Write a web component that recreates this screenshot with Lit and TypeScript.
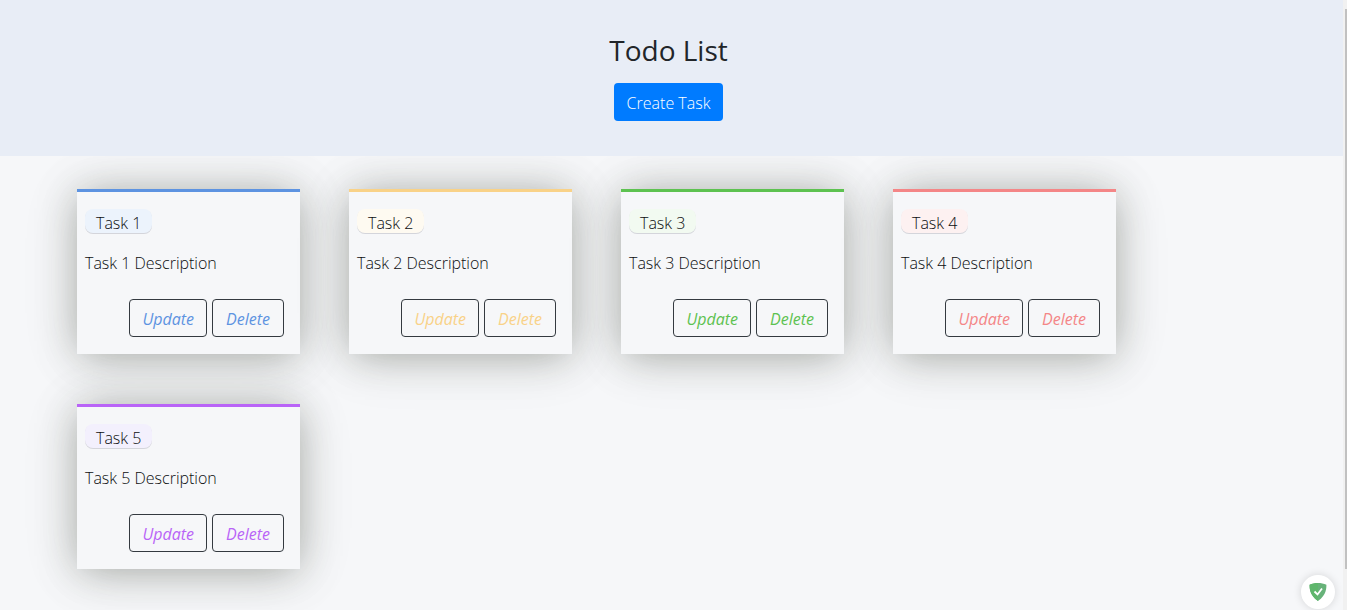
import { LitElement, html, css } from "lit";
import { customElement, property, state } from "lit/decorators.js";

interface Task {
  id: number;
  name: string;
  description: string;
}

const TONES = ["blue", "amber", "green", "red", "violet"];

@customElement("task-card")
class TaskCard extends LitElement {
  @property({ attribute: false }) task!: Task;
  @property({ reflect: true }) tone = "blue";

  static styles = css`
    :host {
      --accent: #5d93e1;
      --tint: #ecf3fc;
      display: flex;
      flex-direction: column;
      box-sizing: border-box;
      padding: 17px 8px;
      border-top: 3px solid var(--accent);
      background: #f6f7f9;
      box-shadow:
        0 3px 38px -3px rgba(46, 52, 36, 0.38),
        0 4px 60px rgba(46, 52, 36, 0.1);
    }
    :host([tone="amber"]) {
      --accent: #f9d288;
      --tint: #fefaf1;
    }
    :host([tone="green"]) {
      --accent: #5dc250;
      --tint: #f2faf1;
    }
    :host([tone="red"]) {
      --accent: #f48687;
      --tint: #fdf1f1;
    }
    :host([tone="violet"]) {
      --accent: #b964f7;
      --tint: #f3f0fd;
    }
    .name {
      align-self: flex-start;
      margin: 0;
      padding: 4px 11px 0;
      border-radius: 8px;
      background: var(--tint);
      box-shadow: 0 1px 0 rgba(40, 40, 60, 0.16);
      font-size: 16px;
      font-weight: 300;
      line-height: 20px;
    }
    .description {
      margin: 18px 0 24px;
      line-height: 24px;
    }
    .actions {
      display: flex;
      justify-content: flex-end;
      gap: 5px;
      padding-right: 8px;
    }
    button {
      box-sizing: border-box;
      min-width: 72px;
      height: 38px;
      padding: 2px 12px 0;
      border: 1px solid #343a40;
      border-radius: 4px;
      background: transparent;
      color: var(--accent);
      font: italic 400 16px/24px "Open Sans", "Noto Sans", sans-serif;
      cursor: pointer;
    }
  `;

  render() {
    return html`
      <h2 class="name">${this.task.name}</h2>
      <p class="description">${this.task.description}</p>
      <div class="actions">
        <button type="button">Update</button>
        <button type="button">Delete</button>
      </div>
    `;
  }
}

@customElement("app-root")
class AppRoot extends LitElement {
  @state() private tasks: Task[] = [1, 2, 3, 4, 5].map((id) => ({
    id,
    name: `Task ${id}`,
    description: `Task ${id} Description`,
  }));

  static styles = css`
    :host {
      display: flex;
      min-height: 100vh;
      background: #f6f7f9;
      color: #0c0e10;
      font: 300 16px/24px "Open Sans", "Noto Sans", sans-serif;
    }
    .page {
      flex: 1;
      min-width: 0;
    }
    header {
      position: relative;
      z-index: 1;
      display: flex;
      flex-direction: column;
      align-items: center;
      gap: 15px;
      padding: 32px 6px 35px 0;
      background: #e8edf6;
    }
    h1 {
      margin: 0;
      color: #212529;
      font-size: 28px;
      font-weight: 500;
      line-height: 36px;
    }
    .create {
      box-sizing: border-box;
      height: 38px;
      padding: 2px 13px 0;
      border: 0;
      border-radius: 4px;
      background: #007bff;
      color: #fff;
      font: inherit;
      cursor: pointer;
    }
    .tasks {
      display: grid;
      grid-template-columns: repeat(auto-fill, 223px);
      gap: 50px 49px;
      padding: 33px 77px 41px;
    }
    .rail {
      display: flex;
      justify-content: flex-end;
      box-sizing: border-box;
      width: 4px;
      padding: 9px 0 41px;
      background: #f1f1f1;
    }
    .thumb {
      width: 2px;
      background: #c1c1c1;
    }
    .shield {
      position: fixed;
      right: 12px;
      bottom: 1px;
      display: grid;
      place-items: center;
      width: 34px;
      height: 34px;
      padding: 0;
      border: 0;
      border-radius: 50%;
      background: #fff;
      box-shadow: 0 0 8px rgba(0, 0, 0, 0.14);
      z-index: 2;
    }
  `;

  render() {
    return html`
      <div class="page">
        <header>
          <h1>Todo List</h1>
          <button class="create" type="button">Create Task</button>
        </header>
        <main class="tasks">
          ${this.tasks.map(
            (task, i) => html`<task-card .task=${task} tone=${TONES[i % TONES.length]}></task-card>`
          )}
        </main>
      </div>
      <div class="rail"><div class="thumb"></div></div>
      <button class="shield" type="button" aria-label="Protection">
        <svg width="18" height="20" viewBox="0 0 18 20">
          <path d="M9 1C6.200 1 3 1.500 .6 2.700C.6 5.500 .3 13 9 19C17.700 13 17.400 5.500 17.400 2.700C15 1.500 11.800 1 9 1Z" fill="#67b279" />
          <path d="M9 1C6.200 1 3 1.500 .6 2.700C.6 5.500 .3 13 9 19Z" fill="#5fb66c" />
          <path d="M5.500 9.500L8.500 12.500L13 6.500" fill="none" stroke="#fff" stroke-width="1.800" />
        </svg>
      </button>
    `;
  }
}
